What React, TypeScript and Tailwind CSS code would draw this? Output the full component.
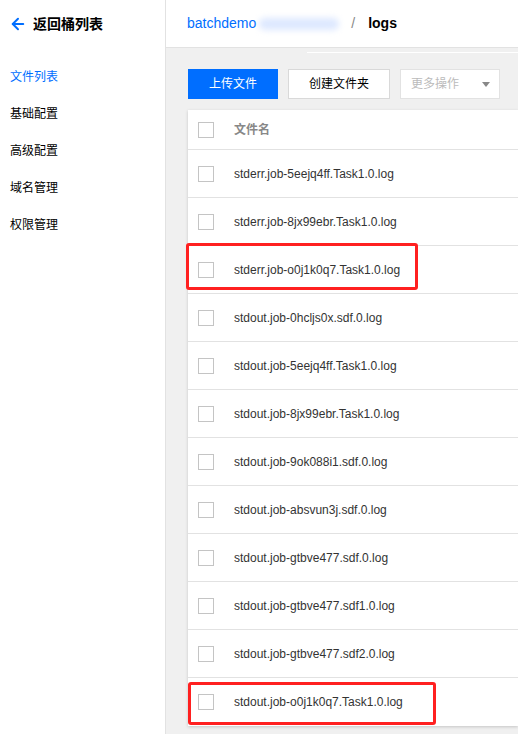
import { ArrowLeft } from "lucide-react";

const files = [
  "stderr.job-5eejq4ff.Task1.0.log",
  "stderr.job-8jx99ebr.Task1.0.log",
  "stderr.job-o0j1k0q7.Task1.0.log",
  "stdout.job-0hcljs0x.sdf.0.log",
  "stdout.job-5eejq4ff.Task1.0.log",
  "stdout.job-8jx99ebr.Task1.0.log",
  "stdout.job-9ok088i1.sdf.0.log",
  "stdout.job-absvun3j.sdf.0.log",
  "stdout.job-gtbve477.sdf.0.log",
  "stdout.job-gtbve477.sdf1.0.log",
  "stdout.job-gtbve477.sdf2.0.log",
  "stdout.job-o0j1k0q7.Task1.0.log",
];

const menu = ["文件列表", "基础配置", "高级配置", "域名管理", "权限管理"];

function Checkbox() {
  return <div className="w-4 h-4 border border-[#c4c4c4] bg-white shrink-0" />;
}

export default function App() {
  return (
    <div
      className="w-[518px] h-[734px] flex overflow-hidden bg-white text-[#333]"
      style={{ fontFamily: '"Liberation Sans", Arial, "Noto Sans CJK SC", sans-serif' }}
    >
      {/* Sidebar */}
      <aside className="w-[166px] shrink-0 border-r border-[#e2e2e2] bg-white">
        <div className="h-[48px] flex items-center pl-[9px] gap-[6px]">
          <ArrowLeft size={18} strokeWidth={2.6} className="text-[#006eff]" />
          <span className="text-[14px] font-bold text-black">返回桶列表</span>
        </div>
        <nav className="pt-[21px] pl-[10px] flex flex-col gap-[21px]">
          {menu.map((m, i) => (
            <div
              key={m}
              className={`text-[12px] leading-[16px] ${i === 0 ? "text-[#006eff]" : "text-black"}`}
            >
              {m}
            </div>
          ))}
        </nav>
      </aside>

      {/* Main */}
      <div className="flex-1 flex flex-col bg-[#f0f0f0] min-w-0">
        <header className="h-[48px] shrink-0 bg-white border-b border-[#e2e2e2] flex items-center pl-[21px] text-[14px]">
          <span className="text-[#006eff]">batchdemo</span>
          <span className="ml-[3px] w-[80px] h-[12px] rounded-full bg-[#dde8ff] blur-[3px]" />
          <span className="ml-[12px] text-[#888]">/</span>
          <span className="ml-[13px] font-bold text-black">logs</span>
        </header>
        <div className="h-px ml-[141px] mt-[4px] bg-white" />

        <div className="pl-[22px] pt-[16px] flex flex-col">
          <div className="flex gap-[10px] h-[30px]">
            <button className="w-[90px] h-[30px] bg-[#006eff] text-white text-[12px]">上传文件</button>
            <button className="w-[102px] h-[30px] bg-white border border-[#d9d9d9] text-black text-[12px]">
              创建文件夹
            </button>
            <button className="w-[100px] h-[30px] bg-white border border-[#e2e2e2] text-[#bbb] text-[12px] flex items-center justify-between pl-[10px] pr-[9px]">
              <span>更多操作</span>
              <svg width="8" height="5" viewBox="0 0 8 5">
                <path d="M0 0h8L4 5z" fill="#888" />
              </svg>
            </button>
          </div>

          <div className="relative mt-[11px] bg-white shadow-[0_1px_3px_rgba(0,0,0,0.18)]">
            <div className="h-[40px] flex items-center pl-[10px] gap-[20px] border-b border-[#e2e2e2]">
              <Checkbox />
              <span className="text-[12px] font-bold text-[#888]">文件名</span>
            </div>
            {files.map((f, i) => (
              <div
                key={f}
                className={`h-[48px] flex items-center pl-[10px] gap-[20px] ${i < files.length - 1 ? "border-b border-[#e2e2e2]" : ""}`}
              >
                <Checkbox />
                <span className="text-[12px] text-[#333]">{f}</span>
              </div>
            ))}

            {/* annotations */}
            <div className="absolute left-[-2px] top-[133px] w-[232px] h-[47px] border-[3px] border-[#ff2020] rounded-[3px]" />
            <div className="absolute left-[0px] top-[572px] w-[248px] h-[43px] border-[3px] border-[#ff2020] rounded-[3px]" />
          </div>
        </div>
      </div>
    </div>
  );
}
